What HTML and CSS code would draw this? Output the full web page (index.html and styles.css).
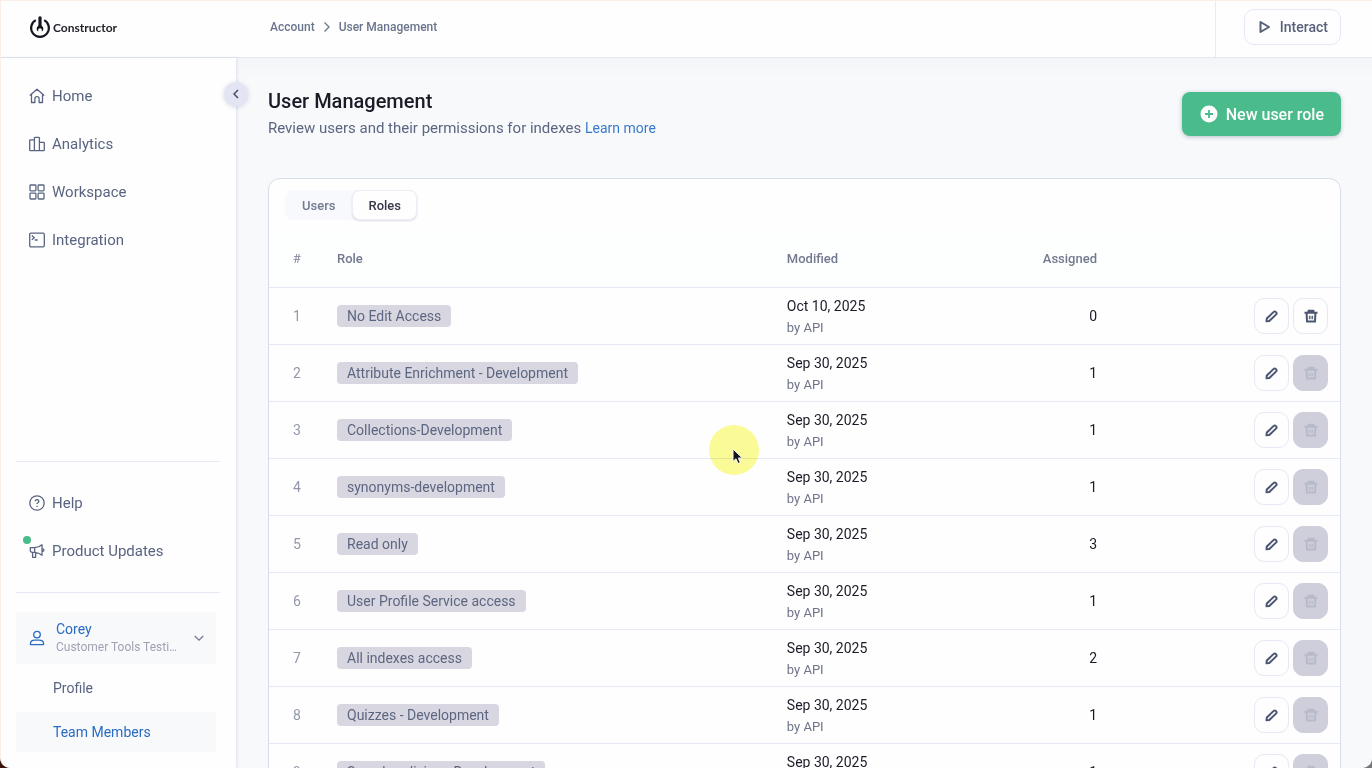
FILE: index.html
```html
<!DOCTYPE html>
<html lang="en">
<head>
    <meta charset="UTF-8">
    <meta name="viewport" content="width=device-width, initial-scale=1.0">
    <title>User Management - Constructor</title>
    <link rel="stylesheet" href="styles.css">
</head>
<body>
    <!-- shared icons -->
    <svg class="sprite" aria-hidden="true">
        <symbol id="icon-pencil" viewBox="0 0 14 14">
            <path d="M1.500 12.300l.3-2.800 6.900-6.600a1.400 1.400 0 0 1 2 0l.5.500a1.400 1.400 0 0 1 0 2l-6.900 6.600z"/>
        </symbol>
        <symbol id="icon-trash" viewBox="0 0 14 14">
            <path d="M.5 3.800h13M4.500 3.600V1.700h5v1.900M2.600 4l.4 8.600h8L11.400 4"/>
            <path d="M5.400 6.800v3.400M8.600 6.800v3.400M7 6.800v3.400" stroke-width="1"/>
        </symbol>
    </svg>

    <div class="app">
        <header class="topbar">
            <a class="logo" href="#">
                <svg width="22" height="24" viewBox="0 0 22 24" aria-hidden="true">
                    <path d="M6.800 5.100a8.900 8.900 0 1 0 8.400 0" fill="none" stroke="#15151f" stroke-width="2.200"/>
                    <path d="M9.400 2q1.600-1.500 3.200 0v8.600l1.600 2v2.600l-1.300 1.400-.3-2.600q-1.600-1.600-3.200 0l-.3 2.600-1.300-1.400v-2.600l1.600-2z" fill="#15151f" stroke="none"/>
                </svg>
                <span>Constructor</span>
            </a>
            <nav class="breadcrumb" aria-label="Breadcrumb">
                <a href="#">Account</a>
                <svg width="8" height="12" viewBox="0 0 8 12" aria-hidden="true"><path d="M1.500 1.500L6 6l-4.500 4.500"/></svg>
                <a href="#">User Management</a>
            </nav>
            <div class="topbar-actions">
                <button class="interact" type="button">
                    <svg width="12" height="14" viewBox="0 0 12 14" aria-hidden="true"><path d="M1.500 2v10L10 7z"/></svg>
                    Interact
                </button>
            </div>
        </header>

        <div class="body">
            <aside class="sidebar">
                <nav class="menu">
                    <a href="#">
                        <svg class="icon" viewBox="0 0 16 16"><path d="M.8 7.600L8 1.200l7.200 6.400M2.500 6.300v8.200h3.400v-3.700a2.100 2.100 0 0 1 4.200 0v3.700h3.400V6.300"/></svg>
                        Home
                    </a>
                    <a href="#">
                        <svg class="icon" viewBox="0 0 16 16"><path d="M.7 4.500q0-.7.700-.7h4v10.900h-4q-.7 0-.7-.7zM5.400 14.700V2q0-.7.700-.7h3.600q.7 0 .7.700v12.700zM10.400 6.300h4.200q.7 0 .7.700v7q0 .7-.7.700h-4.200z"/></svg>
                        Analytics
                    </a>
                    <a href="#">
                        <svg class="icon" viewBox="0 0 16 16"><rect x="1" y="1" width="5.900" height="5.900" rx=".8"/><rect x="9.100" y="1" width="5.900" height="5.900" rx=".8"/><rect x="1" y="9.100" width="5.900" height="5.900" rx=".8"/><rect x="9.100" y="9.100" width="5.900" height="5.900" rx=".8"/></svg>
                        Workspace
                    </a>
                    <a href="#">
                        <svg class="icon" viewBox="0 0 16 16"><rect x=".7" y="1.200" width="14.600" height="13.600" rx="1.200"/><path d="M2.800 3.600l2.500 2.100-2.500 2.100M5.800 8h2.900"/></svg>
                        Integration
                    </a>
                </nav>

                <nav class="menu menu-support">
                    <a href="#">
                        <svg class="icon" viewBox="0 0 16 16"><circle cx="8" cy="8" r="7.200"/><path d="M6.200 6.300a1.800 1.700 0 1 1 2.700 1.500q-.9.500-.9 1.300M8 10.700v1.300"/></svg>
                        Help
                    </a>
                    <a class="has-news" href="#">
                        <svg class="icon" viewBox="0 0 16 16"><path d="M1.300 4.700h4.400q4.100-.3 7.300-3v10.600q-3.200-2.700-7.300-3H3.200a1.900 1.900 0 0 1-1.900-1.900zM5.700 4.700v4.600M13 5.600q2 .2 2 1.500T13 8.500M3.600 9.400v4.900h3V9.400"/></svg>
                        Product Updates
                    </a>
                </nav>

                <div class="account">
                    <button class="account-toggle" type="button" aria-expanded="true">
                        <svg class="icon" viewBox="0 0 16 16"><circle cx="8" cy="4.600" r="3.300"/><path d="M1.500 14.600v-1.300q0-2.800 4.300-3.100h4.400q4.300.3 4.300 3.100v1.300z"/></svg>
                        <span class="account-text">
                            <span class="account-name">Corey</span>
                            <span class="account-company">Customer Tools Testing</span>
                        </span>
                        <svg class="chevron" width="10" height="8" viewBox="0 0 10 8"><path d="M.8 2L5 6.200 9.200 2"/></svg>
                    </button>
                    <a href="#">Profile</a>
                    <a class="active" href="#">Team Members</a>
                </div>

                <button class="collapse" type="button" aria-label="Collapse menu">
                    <svg width="8" height="12" viewBox="0 0 8 12"><path d="M6 2L2 6l4 4"/></svg>
                </button>
            </aside>

            <main class="content">
                <div class="page-head">
                    <div>
                        <h1>User Management</h1>
                        <p>Review users and their permissions for indexes <a href="#">Learn more</a></p>
                    </div>
                    <button class="new-role" type="button">
                        <svg width="18" height="18" viewBox="0 0 18 18" aria-hidden="true"><circle cx="9" cy="9" r="8.500"/><path d="M9 5v8M5 9h8"/></svg>
                        New user role
                    </button>
                </div>

                <section class="card">
                    <div class="tabs">
                        <button class="tab" type="button">Users</button>
                        <button class="tab selected" type="button">Roles</button>
                    </div>
                    <table>
                        <thead>
                            <tr>
                                <th class="num">#</th>
                                <th class="role">Role</th>
                                <th>Modified</th>
                                <th class="assigned">Assigned</th>
                                <td class="actions"></td>
                            </tr>
                        </thead>
                        <tbody id="roles-body">
                            <!-- filled in by roles.js -->
                        </tbody>
                    </table>
                </section>
            </main>
        </div>
    </div>

    <!-- pointer highlight -->
    <div class="pointer" aria-hidden="true">
        <svg width="12" height="18" viewBox="0 0 12 18"><path d="M1 1v12.500l3-2.700 2 4.700 2.300-1-2-4.500h4z"/></svg>
    </div>

    <script src="roles.js"></script>
</body>
</html>
```
FILE: roles.js
```js
const roles = [
    { name: "No Edit Access", modified: "Oct 10, 2025", assigned: 0 },
    { name: "Attribute Enrichment - Development", modified: "Sep 30, 2025", assigned: 1 },
    { name: "Collections-Development", modified: "Sep 30, 2025", assigned: 1 },
    { name: "synonyms-development", modified: "Sep 30, 2025", assigned: 1 },
    { name: "Read only", modified: "Sep 30, 2025", assigned: 3 },
    { name: "User Profile Service access", modified: "Sep 30, 2025", assigned: 1 },
    { name: "All indexes access", modified: "Sep 30, 2025", assigned: 2 },
    { name: "Quizzes - Development", modified: "Sep 30, 2025", assigned: 1 },
    { name: "Searchandizing - Development", modified: "Sep 30, 2025", assigned: 1 }
];

// a role that is still assigned to someone can't be deleted
document.getElementById('roles-body').innerHTML = roles.map((role, i) => `
    <tr>
        <td class="num">${i + 1}</td>
        <td class="role"><span class="badge">${role.name}</span></td>
        <td class="modified"><div>${role.modified}</div><small>by API</small></td>
        <td class="assigned">${role.assigned}</td>
        <td class="actions">
            <div class="action-group">
                <button type="button" aria-label="Edit ${role.name}"><svg width="14" height="14"><use href="#icon-pencil"/></svg></button>
                <button type="button" aria-label="Delete ${role.name}" ${role.assigned ? 'disabled' : ''}><svg width="14" height="14"><use href="#icon-trash"/></svg></button>
            </div>
        </td>
    </tr>
`).join('');
```
FILE: styles.css
```css
* {
    box-sizing: border-box;
}
body {
    margin: 0;
    font-family: Roboto, "Liberation Sans", sans-serif;
    font-size: 14px;
    color: #1b1b28;
    background: linear-gradient(90deg, #3a120a, #77777b);
    overflow: hidden;
}
a {
    color: inherit;
    text-decoration: none;
}
button {
    font-family: inherit;
    cursor: pointer;
}
svg {
    flex: none;
    fill: none;
    stroke: currentColor;
}
.sprite {
    display: none;
}
.app {
    height: 100vh;
    display: flex;
    flex-direction: column;
    background: #fefefe;
    border-top: 1px solid #faeee8;
    border-left: 1px solid #faeee8;
    border-radius: 0 0 10px 10px;
    overflow: hidden;
}

/* top bar */
.topbar {
    flex: none;
    height: 57px;
    display: flex;
    align-items: center;
    padding-bottom: 4px;
    border-bottom: 1px solid #e1e7f0;
}
.logo {
    width: 236px;
    padding-left: 28px;
    display: flex;
    align-items: center;
    gap: 2px;
    font-family: Lato, sans-serif;
    font-size: 12px;
    font-weight: bold;
    color: #22222c;
}
.breadcrumb {
    flex: 1;
    padding-left: 33px;
    display: flex;
    align-items: center;
    gap: 8px;
    font-size: 12px;
    font-weight: 500;
    color: #6a748c;
}
.breadcrumb svg {
    stroke-width: 1.3;
}
.topbar-actions {
    height: 56px;
    margin-bottom: -4px;
    padding: 0 31px 4px 28px;
    display: flex;
    align-items: center;
    border-left: 1px solid #e8ebf5;
}
.interact {
    height: 36px;
    padding: 0 12px 0 14px;
    display: flex;
    align-items: center;
    gap: 9px;
    font-size: 14px;
    font-weight: 500;
    color: #566079;
    background: #fefefe;
    border: 1px solid #e6e8f4;
    border-radius: 10px;
}
.interact svg {
    stroke-width: 2;
    stroke-linejoin: round;
}

.body {
    flex: 1;
    min-height: 0;
    display: flex;
}

/* sidebar */
.sidebar {
    position: relative;
    z-index: 1;
    flex: none;
    width: 235px;
    padding: 14px 15px 16px;
    display: flex;
    flex-direction: column;
    background: #fefefe;
    box-shadow: 1px 0 3px rgba(60, 70, 120, 0.12);
}
.icon {
    width: 16px;
    height: 16px;
    stroke-width: 1.3;
    stroke-linejoin: round;
}
.menu {
    display: flex;
    flex-direction: column;
}
.menu a {
    position: relative;
    height: 48px;
    padding-left: 13px;
    display: flex;
    align-items: center;
    gap: 7px;
    font-size: 15px;
    color: #596480;
}
.menu-support {
    margin-top: auto;
    margin-right: 1px;
    padding: 17px 0;
    border-top: 1px solid #e4e9f3;
    border-bottom: 1px solid #e4e9f3;
}
.has-news::before {
    content: "";
    position: absolute;
    left: 7px;
    top: 9px;
    width: 8px;
    height: 8px;
    border-radius: 50%;
    background: #4abb8b;
}
.account {
    margin-top: 19px;
    margin-right: 5px;
    display: flex;
    flex-direction: column;
    gap: 4px;
}
.account-toggle {
    height: 52px;
    padding: 0 12px 0 13px;
    display: flex;
    align-items: center;
    gap: 11px;
    text-align: left;
    color: #2a6bc2;
    background: #f7f9fb;
    border: none;
    border-radius: 4px;
}
.account-text {
    flex: 1;
    min-width: 0;
}
.account-name {
    display: block;
    font-size: 14px;
    line-height: 18px;
}
.account-company {
    display: block;
    margin-right: 2px;
    font-size: 12px;
    line-height: 18px;
    color: #a0a2b3;
    white-space: nowrap;
    overflow: hidden;
    text-overflow: ellipsis;
}
.chevron {
    color: #767b90;
    stroke-width: 1.3;
}
.account a {
    height: 40px;
    padding-left: 37px;
    display: flex;
    align-items: center;
    font-size: 14px;
    color: #596480;
    border-radius: 4px;
}
.account a.active {
    color: #2a6bc2;
    background: #f7f9fb;
}
.collapse {
    position: absolute;
    top: 24px;
    right: -12px;
    width: 24px;
    height: 24px;
    padding: 0;
    display: flex;
    align-items: center;
    justify-content: center;
    color: #414660;
    background: #e3e5f4;
    border: none;
    border-radius: 50%;
    box-shadow: 0 1px 5px rgba(60, 70, 120, 0.2);
}
.collapse svg {
    stroke-width: 1.4;
}

/* page */
.content {
    flex: 1;
    min-width: 0;
    padding: 30px 31px 0 32px;
    background: linear-gradient(#f3f5f8, #f7f9fb 20px);
    overflow: hidden;
}
.page-head {
    display: flex;
    justify-content: space-between;
    align-items: flex-start;
    margin-bottom: 37px;
}
h1 {
    margin: 0;
    font-size: 20px;
    line-height: 26px;
    font-weight: 500;
}
.page-head p {
    margin: 1px 0 0;
    font-size: 15px;
    line-height: 26px;
    color: #5d6680;
}
.page-head p a {
    font-size: 14px;
    color: #3b7ac8;
}
.new-role {
    height: 44px;
    margin-top: 4px;
    padding: 0 17px 0 18px;
    display: flex;
    align-items: center;
    gap: 8px;
    font-size: 16px;
    font-weight: 500;
    color: #fefefe;
    background: #4abb8b;
    border: none;
    border-radius: 8px;
    box-shadow: 0 1px 4px rgba(40, 60, 80, 0.3);
}
.new-role circle {
    fill: #fefefe;
    stroke: none;
}
.new-role path {
    stroke: #4abb8b;
    stroke-width: 1.8;
}
.card {
    background: #fefefe;
    border: 1px solid #d9dcea;
    border-radius: 12px 12px 0 0;
    overflow: hidden;
}
.tabs {
    width: max-content;
    margin: 11px 16px 10px;
    display: flex;
    background: #f7f9fc;
    border-radius: 8px;
}
.tab {
    height: 30px;
    padding: 0 16px;
    font-size: 13px;
    font-weight: 500;
    color: #737a90;
    background: transparent;
    border: 1px solid transparent;
    border-radius: 8px;
}
.tab.selected {
    padding: 0 15px;
    color: #36374a;
    background: #fefefe;
    border-color: #eeeef7;
    box-shadow: 0 1px 2px rgba(60, 60, 110, 0.18);
}

table {
    width: 100%;
    table-layout: fixed;
    border-collapse: collapse;
}
th, td {
    height: 57px;
    padding: 0;
    text-align: left;
    border-bottom: 1px solid #e4e9f3;
}
th {
    font-size: 13px;
    font-weight: 500;
    color: #737a90;
}
thead tr {
    background: #fdfefe;
}
.num {
    width: 68px;
    padding-right: 12px;
    text-align: center;
    color: #9297aa;
}
.role {
    width: 42%;
}
.modified {
    padding-top: 3px;
}
.modified div {
    line-height: 22px;
}
.modified small {
    display: block;
    font-size: 13px;
    line-height: 22px;
    color: #6e7389;
}
.assigned {
    width: 120px;
    text-align: right;
}
.actions {
    width: 243px;
    padding-right: 12px;
}
.badge {
    display: inline-block;
    vertical-align: middle;
    padding: 0 10px;
    line-height: 22px;
    color: #5d6680;
    background: #d8d7e1;
    border-radius: 4px;
}
.action-group {
    display: flex;
    justify-content: flex-end;
    gap: 4px;
}
.action-group button {
    width: 35px;
    height: 36px;
    padding: 0;
    display: flex;
    align-items: center;
    justify-content: center;
    color: #4c5672;
    background: #fefefe;
    border: 1px solid #e6e8f4;
    border-radius: 10px;
}
.action-group button:disabled {
    color: #b7bac9;
    background: #cecfdb;
    border-color: #cecfdb;
    cursor: default;
}
.action-group svg {
    stroke-width: 2;
    stroke-linejoin: round;
}

/* mouse pointer with its highlight */
.pointer {
    position: absolute;
    left: 709px;
    top: 425px;
    z-index: 5;
    width: 50px;
    height: 50px;
    border-radius: 50%;
    background: #fbfb98;
    mix-blend-mode: multiply;
}
.pointer svg {
    position: absolute;
    left: 23px;
    top: 23px;
    fill: #14141c;
    stroke: #fefefe;
    stroke-width: 1;
}
```
